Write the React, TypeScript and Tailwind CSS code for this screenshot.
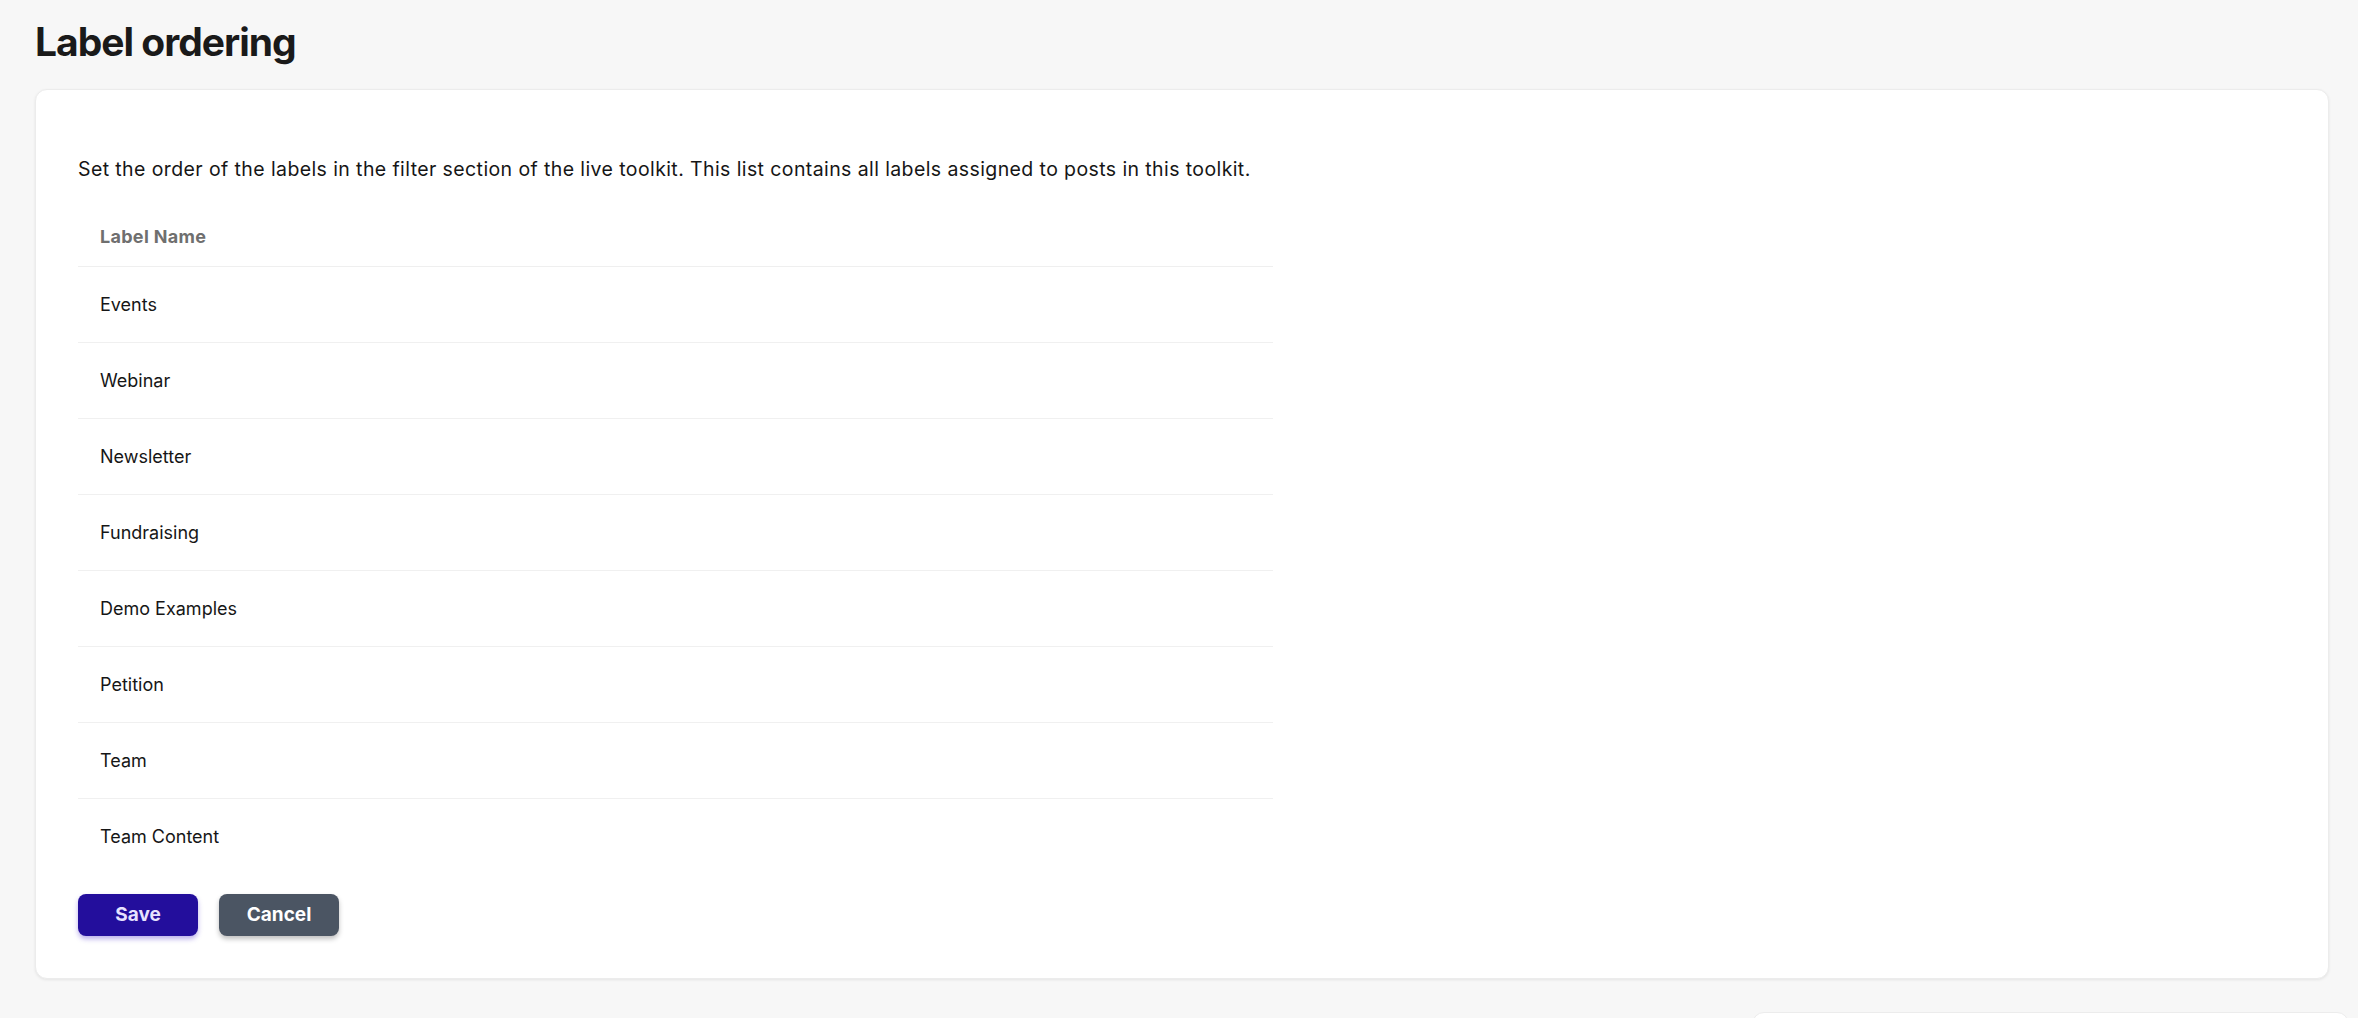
import React from "react";

const labels = [
  "Events",
  "Webinar",
  "Newsletter",
  "Fundraising",
  "Demo Examples",
  "Petition",
  "Team",
  "Team Content",
];

export default function App() {
  return (
    <div
      className="min-h-[1018px] w-full overflow-hidden bg-[#f7f7f7] text-[#161616]"
      style={{ fontFamily: "Inter, 'Noto Sans', sans-serif" }}
    >
      <div className="pl-[35px] pr-[29px] pt-[18px]">
        <h1 className="text-[39px] font-bold leading-[48px] tracking-[-1px] text-[#1a1a1a]">
          Label ordering
        </h1>
        <div className="mt-[23px] rounded-[12px] border border-[#ececec] bg-white px-[42px] pb-[42px] pt-[65px] shadow-[0_1px_3px_rgba(0,0,0,0.08)]">
          <p className="text-[19.5px] leading-[28px] tracking-[0.4px] text-[#161616]">
            Set the order of the labels in the filter section of the live toolkit. This list contains all labels assigned to posts in this toolkit.
          </p>
          <div className="mt-[24px] w-[1195px]">
            <div className="flex h-[60px] items-center border-b border-[#efefef] px-[22px] text-[18px] font-bold tracking-[0.3px] text-[#6f6f6f]">
              Label Name
            </div>
            {labels.map((l, i) => (
              <div
                key={l}
                className={
                  i < labels.length - 1
                    ? "flex h-[76px] items-center border-b border-[#f0f0f0] px-[22px] text-[18px] text-[#161616]"
                    : "flex h-[75px] items-center px-[22px] text-[18px] text-[#161616]"
                }
              >
                {l}
              </div>
            ))}
          </div>
          <div className="mt-[20px] flex gap-[21px]">
            <button className="h-[42px] w-[120px] rounded-[8px] bg-[#230e9c] text-[19px] font-bold text-[#e6e2ff] shadow-[0_3px_5px_rgba(60,30,200,0.35)]">
              Save
            </button>
            <button className="h-[42px] w-[120px] rounded-[8px] bg-[#4b5563] text-[19px] font-bold text-white shadow-[0_3px_5px_rgba(0,0,0,0.25)]">
              Cancel
            </button>
          </div>
        </div>
        <div className="ml-[1717px] mr-[-20px] mt-[33px] h-[40px] rounded-t-[12px] border border-[#ececec] bg-white" />
      </div>
    </div>
  );
}
